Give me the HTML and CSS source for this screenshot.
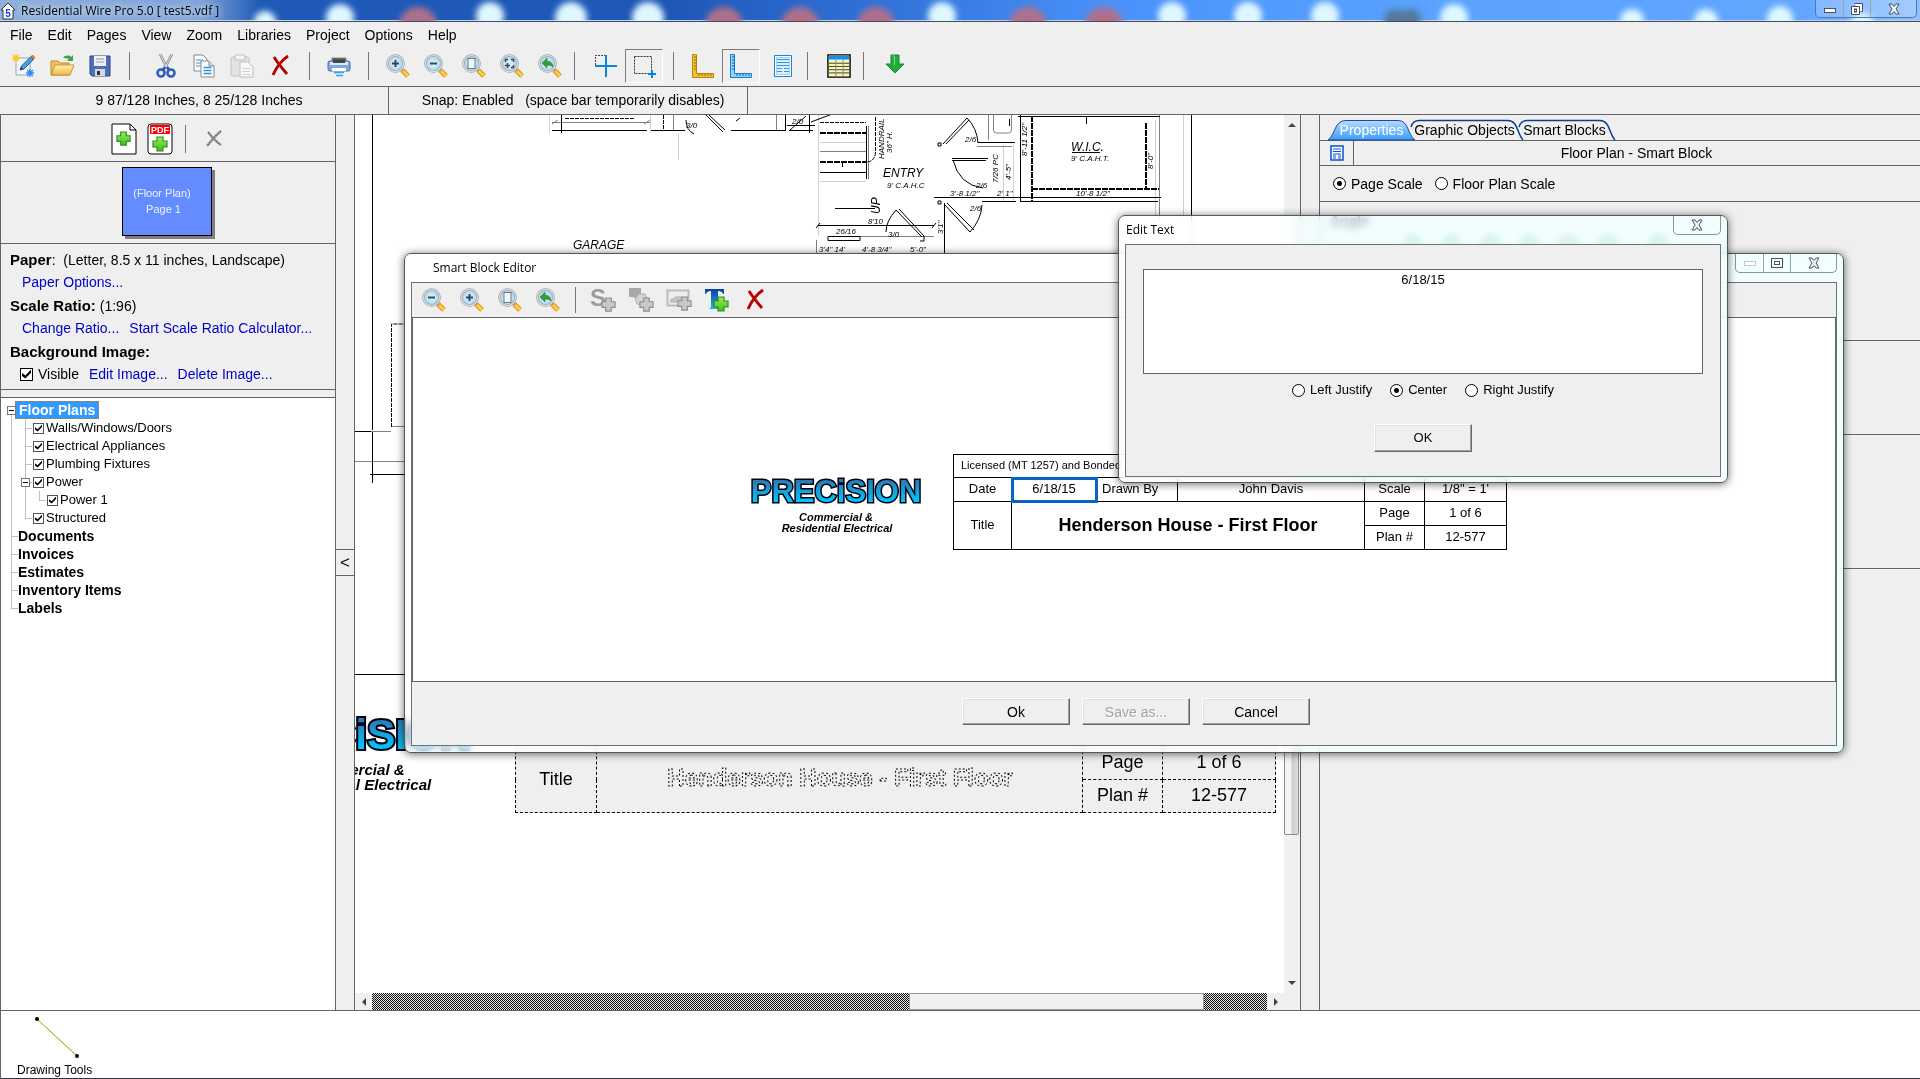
FILE: index.html
```html
<!DOCTYPE html>
<html lang="en">
<head>
<meta charset="utf-8">
<title>Residential Wire Pro 5.0</title>
<link rel="stylesheet" href="styles.css">
</head>
<body>
<svg class="defs" aria-hidden="true">
  <defs>
    <radialGradient id="lens"><stop offset="0" stop-color="#e4f7ff"/><stop offset="1" stop-color="#9fd6f5"/></radialGradient>
    <linearGradient id="folder" x2="0" y2="1"><stop offset="0" stop-color="#fff0b8"/><stop offset="1" stop-color="#f0b83c"/></linearGradient>
    <linearGradient id="greenFill" x2="0" y2="1"><stop offset="0" stop-color="#9be85c"/><stop offset="1" stop-color="#3fc01e"/></linearGradient>
    <linearGradient id="logoFill" x2="0" y2="1"><stop offset="0.1" stop-color="#336fa8"/><stop offset="0.8" stop-color="#00c8ff"/></linearGradient>
    <linearGradient id="tFill" x2="0" y2="1"><stop offset="0" stop-color="#0a3f9e"/><stop offset="1" stop-color="#1cb4f5"/></linearGradient>
    <linearGradient id="tabFill" x2="0" y2="1"><stop offset="0" stop-color="#b4dbff"/><stop offset="1" stop-color="#3c9cfa"/></linearGradient>
  </defs>
  <symbol id="mag" viewBox="0 0 24 24">
    <path d="M16 16l6 6" stroke="#d98a1c" stroke-width="5"/><path d="M16 16l6 6" stroke="#ffd23c" stroke-width="3"/>
    <path d="M14 14l3 3" stroke="#999" stroke-width="2"/>
    <circle cx="9.500" cy="9.500" r="8" fill="url(#lens)" stroke="#8e9399" stroke-width="2.500"/><circle cx="9.500" cy="9.500" r="8" fill="none" stroke="#d8dadd" stroke-width="1.500"/>
  </symbol>
  <symbol id="zoom-in" viewBox="0 0 24 24"><use href="#mag"/><path d="M6 9.500h7M9.500 6v7" stroke="#444" stroke-width="2"/></symbol>
  <symbol id="zoom-out" viewBox="0 0 24 24"><use href="#mag"/><path d="M6 9.500h7" stroke="#444" stroke-width="2"/></symbol>
  <symbol id="zoom-page" viewBox="0 0 24 24"><use href="#mag"/><rect x="6" y="4.500" width="7" height="10" fill="#eef8ff" stroke="#777"/></symbol>
  <symbol id="zoom-fit" viewBox="0 0 24 24"><use href="#mag"/><path d="M5.500 8V5.500H8M11 5.500h2.500V8M13.500 11v2.500H11M5 11.500h5M7.500 9v5" fill="none" stroke="#444" stroke-width="1.500"/></symbol>
  <symbol id="zoom-back" viewBox="0 0 24 24"><use href="#mag"/><path d="M4 9l5-5v3c4 0 6 3 6 6-2-2-4-2-6-1.500V14z" fill="#3a9a3a" stroke="#2a7a2a" stroke-width=".5"/></symbol>
  <symbol id="new" viewBox="0 0 24 24">
    <path d="M4 4h14v17H4z" fill="#f2f6fb" stroke="#9aa7b8"/><path d="M8 16l1.500-4L19 2.500l3 2.500L12 15z" fill="#4a9de0" stroke="#245f9c"/><path d="M19 2.500l1.500-1.500 2.500 2.500L21.500 5z" fill="#e87b20" stroke="#9c4a10" stroke-width=".5"/><path d="M8 16l1-3 2 2z" fill="#333"/>
    <path d="M4 0v8M0 4h8M1 1l6 6M7 1L1 7" stroke="#ffc822" stroke-width="1.300"/><path d="M18 15v8M14 19h8M15 16l6 6M21 16l-6 6" stroke="#2e8bf0" stroke-width="1.400"/>
  </symbol>
  <symbol id="open" viewBox="0 0 24 24">
    <path d="M1 21V7h7l2 2h9v12z" fill="#f0c262" stroke="#b98a2c"/><path d="M1 21l4-10h19l-4 10z" fill="url(#folder)" stroke="#c9932f"/>
    <path d="M13 4c2-3 6-3 8-1l2-2v6h-6l2-2c-2-1-4-1-6-1z" fill="#3da63d"/>
  </symbol>
  <symbol id="save" viewBox="0 0 24 24">
    <path d="M2 2h20v20H4l-2-2z" fill="#4d6fc0" stroke="#2d4485"/><path d="M6 2h12v10H6z" fill="#eef0f3"/><path d="M8 5h8M8 8h8" stroke="#999"/><path d="M7 15h10v7H7z" fill="#d5d9e0"/><path d="M9 17h3v4H9z" fill="#333"/>
  </symbol>
  <symbol id="cut" viewBox="0 0 24 24">
    <path d="M6 0l7 14M18 0l-7 14" stroke="#888" stroke-width="2.600"/><path d="M6 0l7 14M18 0l-7 14" stroke="#e8e8e8" stroke-width="1"/>
    <path d="M11 13l-2 3M13 13l2 3" stroke="#2f5fb8" stroke-width="3"/>
    <circle cx="7" cy="19" r="3.500" fill="none" stroke="#2f5fb8" stroke-width="2.600"/><circle cx="17" cy="19" r="3.500" fill="none" stroke="#2f5fb8" stroke-width="2.600"/>
  </symbol>
  <symbol id="copy" viewBox="0 0 24 24">
    <path d="M2 1h9l4 4v12H2z" fill="#fff" stroke="#888"/><path d="M4 6h7M4 9h7M4 12h7" stroke="#2a8fe0"/>
    <path d="M9 7h8l5 5v11H9z" fill="#fff" stroke="#888"/><path d="M17 7v5h5" fill="#ddd" stroke="#888"/><path d="M11.500 13.500h8M11.500 16.500h8M11.500 19.500h8" stroke="#2a8fe0" stroke-width="1.500"/>
  </symbol>
  <symbol id="paste" viewBox="0 0 24 24">
    <rect x="1" y="3" width="18" height="19" rx="2" fill="#e3e3e3" stroke="#c4c4c4"/><rect x="5" y="1" width="10" height="5" rx="2" fill="#f4f4f4" stroke="#bbb"/>
    <path d="M10 8h8l5 5v10H10z" fill="#f8f8f8" stroke="#bdbdbd"/><path d="M12.500 14.500h8M12.500 17.500h8M12.500 20.500h8" stroke="#d0d0d0"/>
  </symbol>
  <symbol id="del" viewBox="0 0 24 24"><path d="M20 2C14 6 9 12 5 21M6 3c3 5 7 10 13 17" fill="none" stroke="#b80000" stroke-width="2.800"/></symbol>
  <symbol id="print" viewBox="0 0 24 24">
    <path d="M5 4h14v6H5z" fill="#555" stroke="#888"/><rect x="1" y="7" width="22" height="10" rx="2" fill="#7fa9de" stroke="#4770a8"/><path d="M3 8h18v3H3z" fill="#dbe8f7"/><path d="M6 6h12v3H6z" fill="#444"/><path d="M5 14h14v3H5z" fill="#fff"/><path d="M7 18.500h10M9 21.500h7" stroke="#25a7f0" stroke-width="1.500"/>
  </symbol>
  <symbol id="cross" viewBox="0 0 24 24"><path d="M1.500 11V1.500H11" fill="none" stroke="#444" stroke-dasharray="2 1"/><path d="M12 1v22M1 12h22" stroke="#0a84d6" stroke-width="2"/></symbol>
  <symbol id="marquee" viewBox="0 0 24 24"><rect x="2.500" y="2.500" width="17" height="17" fill="none" stroke="#333" stroke-dasharray="2 1"/><path d="M16 20h8M20 16v8" stroke="#0a84d6" stroke-width="2"/></symbol>
  <symbol id="ruler-y" viewBox="0 0 24 26"><path d="M1.500 1.500h4v19h17v4h-21z" fill="#f5c02c" stroke="#b8860b"/><path d="M3 4h3M3 7h3M3 10h3M3 13h3M3 16h3M8 23v-2M11 23v-2M14 23v-2M17 23v-2M20 23v-2" stroke="#9a6c00"/></symbol>
  <symbol id="ruler-b" viewBox="0 0 24 26"><path d="M1.500 1.500h4v19h17v4h-21z" fill="#8fd5fb" stroke="#1680d0"/><path d="M3 4h3M3 7h3M3 10h3M3 13h3M3 16h3M8 23v-2M11 23v-2M14 23v-2M17 23v-2M20 23v-2" stroke="#0e64ad"/></symbol>
  <symbol id="doc" viewBox="0 0 24 24"><path d="M3.500 1.500h17v21h-17z" fill="#fff" stroke="#1b86d8"/><path d="M5.500 3.500h13v17h-13z" fill="#d9effc" stroke="#9bd0f0"/><path d="M6 5.500h12M6 8.500h12M6 11.500h12M6 14.500h5M6 17.500h5M13 14.500h5M13 17.500h5" stroke="#3c95d8"/></symbol>
  <symbol id="grid" viewBox="0 0 26 26"><path d="M1 1h24v24H1z" fill="#f8f8b0" stroke="#000" stroke-width="1.500"/><path d="M2 2h22v4H2z" fill="#1490f0"/><path d="M2 10h22M2 13.500h22M2 17h22M2 20.500h22" stroke="#333"/><path d="M9.500 6v18M17.500 6v18" stroke="#888"/></symbol>
  <symbol id="down" viewBox="0 0 24 24"><path d="M8 1h8v9h5l-9 9-9-9h5z" fill="#22ab3c" stroke="#138a2a"/><path d="M9.500 2h2v9" fill="none" stroke="#7ddd82"/></symbol>
  <symbol id="plus" viewBox="0 0 16 16"><path d="M5 1h6v4h4v6h-4v4H5v-4H1V5h4z" fill="url(#greenFill)" stroke="#2c8f1a" stroke-width="1.200"/></symbol>
  <symbol id="plus-off" viewBox="0 0 16 16"><path d="M5 1h6v4h4v6h-4v4H5v-4H1V5h4z" fill="#c8c8c8" stroke="#8d8d8d" stroke-width="1.200"/></symbol>
  <symbol id="x-close" viewBox="0 0 12 12"><path d="M1 1h3l2 2.500L8 1h3L8 6l3 5H8L6 8.500 4 11H1l3-5z" fill="#f4f4f8" stroke="#4a4f63"/></symbol>
</svg>

<div class="app">
  <header class="titlebar">
    <svg class="desktop-bleed" aria-hidden="true">
      <g class="blob-white"><circle cx="265" cy="22" r="11"/><circle cx="340" cy="18" r="14"/><circle cx="490" cy="16" r="14"/><circle cx="571" cy="18" r="16"/><circle cx="648" cy="18" r="16"/><circle cx="942" cy="16" r="14"/><circle cx="1172" cy="16" r="14"/><circle cx="1248" cy="16" r="14"/><circle cx="1325" cy="16" r="14"/><circle cx="1454" cy="18" r="14"/><circle cx="1632" cy="21" r="12"/><circle cx="1706" cy="21" r="12"/><circle cx="1780" cy="19" r="13"/><circle cx="1862" cy="25" r="12"/></g>
      <g class="blob-red"><circle cx="418" cy="26" r="19"/><circle cx="724" cy="26" r="19"/><circle cx="800" cy="26" r="19"/><circle cx="876" cy="26" r="19"/><circle cx="1028" cy="26" r="19"/><circle cx="1104" cy="26" r="19"/></g>
      <g class="blob-dark"><circle cx="1395" cy="20" r="11"/><circle cx="1410" cy="20" r="11"/></g>
    </svg>
    <svg class="app-icon" width="16" height="18" viewBox="0 0 16 18"><path d="M1 8l7-7 7 7h-2v9H3V8z" fill="#fff" stroke="#333"/><text x="8" y="15" text-anchor="middle" class="app-num">5</text></svg>
    <h1 class="caption">Residential Wire Pro 5.0 [ test5.vdf ]</h1>
    <div class="sysbtns main-sys">
      <button aria-label="Minimize"><svg width="12" height="12"><rect x=".5" y="5.500" width="11" height="4" fill="#fff" stroke="#4a4f63"/></svg></button>
      <button aria-label="Restore"><svg width="12" height="12"><path d="M3.500.500h8v8h-2M.500 3.500h8v8h-8z" fill="#fff" stroke="#4a4f63"/><rect x="3.500" y="6" width="2" height="3" fill="none" stroke="#4a4f63"/></svg></button>
      <button class="wide" aria-label="Close"><svg width="12" height="12"><use href="#x-close"/></svg></button>
    </div>
  </header>

  <nav class="menubar">
    <button>File</button><button>Edit</button><button>Pages</button><button>View</button><button>Zoom</button><button>Libraries</button><button>Project</button><button>Options</button><button>Help</button>
  </nav>

  <div class="toolbar">
    <button class="tool" aria-label="New"><svg><use href="#new"/></svg></button>
    <button class="tool" aria-label="Open"><svg><use href="#open"/></svg></button>
    <button class="tool" aria-label="Save"><svg><use href="#save"/></svg></button>
    <i class="sep wide"></i>
    <button class="tool" aria-label="Cut"><svg><use href="#cut"/></svg></button>
    <button class="tool" aria-label="Copy"><svg><use href="#copy"/></svg></button>
    <button class="tool" aria-label="Paste" disabled><svg><use href="#paste"/></svg></button>
    <button class="tool" aria-label="Delete"><svg><use href="#del"/></svg></button>
    <i class="sep"></i>
    <button class="tool" aria-label="Print"><svg><use href="#print"/></svg></button>
    <i class="sep"></i>
    <button class="tool" aria-label="Zoom in"><svg><use href="#zoom-in"/></svg></button>
    <button class="tool" aria-label="Zoom out"><svg><use href="#zoom-out"/></svg></button>
    <button class="tool" aria-label="Zoom page"><svg><use href="#zoom-page"/></svg></button>
    <button class="tool" aria-label="Zoom fit"><svg><use href="#zoom-fit"/></svg></button>
    <button class="tool" aria-label="Zoom back"><svg><use href="#zoom-back"/></svg></button>
    <i class="sep tight"></i>
    <button class="tool" aria-label="Snap"><svg><use href="#cross"/></svg></button>
    <button class="tool pressed" aria-label="Select area"><svg><use href="#marquee"/></svg></button>
    <i class="sep"></i>
    <button class="tool" aria-label="Ruler"><svg class="tall"><use href="#ruler-y"/></svg></button>
    <button class="tool pressed" aria-label="Scale ruler"><svg class="tall"><use href="#ruler-b"/></svg></button>
    <button class="tool spaced" aria-label="Title block"><svg><use href="#doc"/></svg></button>
    <i class="sep tight"></i>
    <button class="tool" aria-label="Schedule"><svg class="tall"><use href="#grid"/></svg></button>
    <i class="sep tight"></i>
    <button class="tool" aria-label="Download"><svg><use href="#down"/></svg></button>
  </div>

  <div class="status">
    <div class="cell position">9 87/128 Inches, 8 25/128 Inches</div>
    <div class="cell snap">Snap: Enabled &nbsp; (space bar temporarily disables)</div>
  </div>

  <main class="work">
    <aside class="left">
      <div class="page-tools">
        <button aria-label="Add page"><svg width="26" height="32"><path d="M1 1h18l6 6v24H1z" fill="#fff" stroke="#000"/><path d="M19 1v6h6" fill="none" stroke="#000"/><use href="#plus" x="5" y="8" width="15" height="15"/></svg></button>
        <button aria-label="Add PDF page"><svg width="26" height="32"><rect x="1" y="1" width="24" height="30" rx="3" fill="#fff" stroke="#000"/><rect x="3" y="2" width="20" height="9" rx="1" fill="#f00"/><text x="13" y="10" text-anchor="middle" class="pdf">PDF</text><use href="#plus" x="5" y="13" width="16" height="16"/></svg></button>
        <i class="sep"></i>
        <button class="off" aria-label="Remove page" disabled><svg width="16" height="18"><path d="M15 1C9 6 5 11 1 16M2 2c4 5 8 10 13 13" fill="none" stroke="#9a9a9a" stroke-width="2.500"/><path d="M15 1C9 6 5 11 1 16M2 2c4 5 8 10 13 13" fill="none" stroke="#333" stroke-dasharray="1 2"/></svg></button>
      </div>
      <div class="thumbs"><button class="thumb">(Floor Plan)<br>&nbsp;Page 1</button></div>
      <div class="info">
        <div class="info-group"><p><b>Paper</b>: &nbsp;(Letter, 8.5 x 11 inches, Landscape)</p><p class="links"><a href="#">Paper Options...</a></p></div>
        <div class="info-group"><p><b>Scale Ratio:</b> (1:96)</p><p class="links"><a href="#">Change Ratio...</a><a href="#">Start Scale Ratio Calculator...</a></p></div>
        <div class="info-group"><p><b>Background Image:</b></p><p class="links"><label class="vis"><input class="check big" type="checkbox" checked>Visible</label><a href="#">Edit Image...</a><a href="#">Delete Image...</a></p></div>
      </div>
      <div class="tree">
        <ul>
          <li><div class="row"><i class="exp"></i><strong class="sel">Floor Plans</strong></div>
            <ul>
              <li><label class="row"><input class="check" type="checkbox" checked>Walls/Windows/Doors</label></li>
              <li><label class="row"><input class="check" type="checkbox" checked>Electrical Appliances</label></li>
              <li><label class="row"><input class="check" type="checkbox" checked>Plumbing Fixtures</label></li>
              <li><label class="row"><i class="exp"></i><input class="check" type="checkbox" checked>Power</label>
                <ul><li><label class="row"><input class="check" type="checkbox" checked>Power 1</label></li></ul></li>
              <li><label class="row"><input class="check" type="checkbox" checked>Structured</label></li>
            </ul></li>
          <li><div class="row"><strong>Documents</strong></div></li>
          <li><div class="row"><strong>Invoices</strong></div></li>
          <li><div class="row"><strong>Estimates</strong></div></li>
          <li><div class="row"><strong>Inventory Items</strong></div></li>
          <li><div class="row"><strong>Labels</strong></div></li>
        </ul>
      </div>
    </aside>
    <div class="gutter"><button class="collapse">&lt;</button></div>

    <section class="view">
      <div class="canvas">
        <svg class="plan" width="930" height="561" viewBox="355 115 930 561" aria-label="Floor plan">
          <g class="faint"><path d="M549.500 115v18M650.500 115v18M678.500 133v27M818.500 115v121M820 142.500h46M820 181.500h46M1003.500 145v56M1013.500 145v56M1183.500 115v110M1155.500 120v100"/></g>
          <g class="mid"><path d="M552 122.500h98M552 124l6-4M644 124l6-4M673.500 115v15M776.500 115v15M988.500 115v25M977 146.500h35M1159.500 115v110M820 151.500h46M371 431.500h20M391 426.500h13M355 461.500h49M868.500 126v53M832 133.500h8M993.500 115v15q0 3 3 3h12q3 0 3-3v-15M840 236.500h94M816.500 240v13"/></g>
          <g class="ink"><path d="M372.500 115v315M372.500 432v51M1191.500 115v140M355 431.500h16M370 474.500h34M355 674.500h49M561.500 115v18M552 130.500h95M651 130.500h34M731 130.500h54M785.500 115v16M787 125.500h28M789 130.500h24M809.500 115v18M706 115l17 17M709 115l16 15M790 130l16-14M811 122l24-9M820 172.500h46M866.500 126v53M842.500 162v5M835 208.500h40M818 225.500h116M816 228l4-5M932 228l4-5M828 236.500h32v4h-32zM896 210l26 27M899 209l25 27v5h-4M896 210q-10 11-10 22M944.500 203v50M934 197.500h26M944 204l26 28M947 203l27 27M982 205q-1 15-12 27M943 144l24-26M946 144l23-24M967 118q10 10 11 25M978 142.500h37M952 158.500h36M953 160q6 25 30 28M952 160.500h34M960 197.500h57M982 201.500h34M1018 116.500h142M1020.500 115v87M1016 197.500h145M1020 201.500h138M1086.500 116v8M1072 152.500h28M686 120q0 10 8 14M938 143h3v3h-3zM938 201h3v3h-3zM1009.500 119v7M736 121l4-3"/></g>
          <g class="ink thick"><path d="M820 133h46M820 162h46M1032 116v86M1032 189h127M1146 123v66" stroke-dasharray="6 1"/></g>
          <g class="ink dash"><path d="M565 118.500h70M663.500 115v15M820 122.500h46M875.500 117v36q-1 8-8 9M391.500 427v-103h13"/></g>
          <g class="hand"><text x="573" y="249" class="room">GARAGE</text><text x="883" y="177" class="room">ENTRY</text><text x="1071" y="151" class="room">W.I.C.</text><text x="887" y="188">9' C.A.H.C</text><text x="1071" y="161">9' C.A.H.T.</text><text x="868" y="224">8'10</text><text x="836" y="234">26/16</text><text x="888" y="237">3/0</text><text x="686" y="128">3/0</text><text x="792" y="124">2/0</text><text x="819" y="252">3'4"  14'</text><text x="862" y="252">4'-8 3/4"</text><text x="910" y="252">5'-0"</text><text x="965" y="142">2/6</text><text x="976" y="188">2/6</text><text x="970" y="211">2/6</text><text x="950" y="196">3'-8 1/2"</text><text x="997" y="196">2' 1"</text><text x="1076" y="196">10'-8 1/2"</text>
            <text transform="translate(1027 156) rotate(-90)">8'-11 1/2"</text><text transform="translate(1153 169) rotate(-90)">8'-0"</text><text transform="translate(1011 180) rotate(-90)">4'-5"</text><text transform="translate(998 183) rotate(-90)">7/26 PC</text><text transform="translate(884 159) rotate(-90)">HANDRAIL</text><text transform="translate(892 153) rotate(-90)">36" H.</text><text transform="translate(880 214) rotate(-90)" class="room">UP</text><text transform="translate(943 234) rotate(-90)">3'1"</text></g>
        </svg>
        <svg class="logo big-logo" viewBox="0 0 172 78" aria-label="Precision Commercial &amp; Residential Electrical"><use href="#logo"/></svg>
        <table class="block ghost">
          <colgroup><col class="g1"><col class="g2"><col class="g3"><col class="g4"></colgroup>
          <tr><td rowspan="2">Title</td><td rowspan="2"><svg class="ghost-title" width="400" height="40"><text x="200" y="27" text-anchor="middle">Henderson House - First Floor</text></svg></td><td>Page</td><td>1 of 6</td></tr>
          <tr><td>Plan #</td><td>12-577</td></tr>
        </table>
      </div>
      <div class="vbar"><i class="arr up"></i><i class="vthumb"></i><i class="arr dn"></i></div>
      <div class="hbar"><span class="hend"><i class="arr lt"></i></span><span class="htrack"><i class="hthumb"></i></span><span class="hend"><i class="arr rt"></i></span></div>
    </section>
    <div class="gutter right-gutter"></div>

    <aside class="right">
      <div class="tabs">
        <button class="tab on"><svg class="tab-shape" viewBox="0 0 87 20" preserveAspectRatio="none"><path d="M0 20C8 14 6 .500 18 .500H70C81 .500 79 14 87 20z" fill="url(#tabFill)" stroke="#1c4b9c"/></svg><span>Properties</span></button>
        <button class="tab"><svg class="tab-shape" viewBox="0 0 113 20" preserveAspectRatio="none"><path d="M1 7Q3 .500 9 .500H98C108 .500 107 14 113 20" fill="none" stroke="#0a3c9c" stroke-width="1.500"/></svg><span>Graphic Objects</span></button>
        <button class="tab"><svg class="tab-shape" viewBox="0 0 97 20" preserveAspectRatio="none"><path d="M1 7Q3 .500 9 .500H82C92 .500 91 14 97 20" fill="none" stroke="#0a3c9c" stroke-width="1.500"/></svg><span>Smart Blocks</span></button>
      </div>
      <div class="prop-head"><button class="prop-icon" aria-label="Block properties"><svg width="14" height="16"><path d="M1 1h12v14H1z" fill="#fff" stroke="#0a4fd0" stroke-width="1.500"/><path d="M3 4h8M3 6.500h8M3 9h8M3 11h3M8 11h3M3 13h3M8 13h3" stroke="#0a4fd0"/></svg></button><h2>Floor Plan - Smart Block</h2></div>
      <div class="scale-row"><label><input class="radio" type="radio" name="scale" checked>Page Scale</label><label><input class="radio" type="radio" name="scale">Floor Plan Scale</label></div>
      <div class="prop-sec angle"><b>Angle</b><div class="dials"><i></i><i></i><i></i><i></i><i></i><i></i><i></i></div></div>
      <div class="prop-sec s2"></div>
      <div class="prop-sec s3"></div>
    </aside>
  </main>

  <footer class="tray">
    <button class="draw-tool"><svg width="46" height="42"><path d="M3 3l40 37" stroke="#9a9a00"/><circle cx="3" cy="3" r="2"/><circle cx="43" cy="40" r="2"/></svg>Drawing Tools</button>
  </footer>
</div>

<section class="window editor">
  <header class="win-title"><h2>Smart Block Editor</h2>
    <div class="sysbtns">
      <button disabled aria-label="Minimize"><svg width="12" height="12"><rect x=".5" y="4.500" width="11" height="4" fill="#fff" stroke="#c4c8cc"/></svg></button>
      <button aria-label="Maximize"><svg width="12" height="12"><rect x=".5" y="1.500" width="11" height="9" fill="#fff" stroke="#4a4f63"/><rect x="3.500" y="4.500" width="5" height="3" fill="none" stroke="#4a4f63"/></svg></button>
      <button class="wide" aria-label="Close"><svg width="12" height="12"><use href="#x-close"/></svg></button>
    </div>
  </header>
  <div class="win-body">
    <div class="ed-tools">
      <button class="tool" aria-label="Zoom out"><svg><use href="#zoom-out"/></svg></button>
      <button class="tool" aria-label="Zoom in"><svg><use href="#zoom-in"/></svg></button>
      <button class="tool" aria-label="Zoom page"><svg><use href="#zoom-page"/></svg></button>
      <button class="tool" aria-label="Zoom back"><svg><use href="#zoom-back"/></svg></button>
      <i class="sep small"></i>
      <button class="tool" disabled aria-label="Add symbol"><svg><text x="-1" y="18" class="glyph-s">S</text><use href="#plus-off" x="10" y="9" width="15" height="15"/></svg></button>
      <button class="tool" disabled aria-label="Add shape"><svg><path d="M0 0h12v9H0z" fill="#a8a8a8"/><path d="M4 9h5M10 6l6 0 3 6-4 5-7-1-2-6z" fill="#d4d4d4" stroke="#aaa"/><use href="#plus-off" x="10" y="9" width="15" height="15"/></svg></button>
      <button class="tool" disabled aria-label="Add picture"><svg><path d="M.500 2.500h21v15H.500z" fill="#eee" stroke="#bbb" stroke-width="2"/><path d="M3 12c5-5 10-5 16-2v5H3z" fill="#c2c2c2"/><use href="#plus-off" x="10" y="8" width="15" height="15"/></svg></button>
      <button class="tool" aria-label="Add text"><svg><path d="M0 1h19v5h-1q-1-3-5-3v16l2 2H4l2-2V3q-4 0-5 3H0z" fill="url(#tFill)"/><use href="#plus" x="8" y="8" width="16" height="16"/></svg></button>
      <button class="tool" aria-label="Delete"><svg><use href="#del"/></svg></button>
    </div>
    <div class="ed-canvas">
      <svg class="logo" viewBox="0 0 172 78" aria-label="Precision Commercial &amp; Residential Electrical">
        <g id="logo">
          <text x="86" y="45" text-anchor="middle" class="logo-word">PRECiSION</text>
          <text x="86" y="64" text-anchor="middle" class="logo-sub">Commercial &amp;</text>
          <text x="87" y="75" text-anchor="middle" class="logo-sub">Residential Electrical</text>
        </g>
      </svg>
      <table class="block">
        <colgroup><col class="c1"><col class="c2"><col class="c3"><col class="c4"><col class="c5"><col class="c6"></colgroup>
        <tr><td colspan="6" class="lic">Licensed (MT 1257) and Bonded</td></tr>
        <tr><td>Date</td><td class="picked">6/18/15</td><td class="by">Drawn By</td><td>John Davis</td><td>Scale</td><td>1/8" = 1'</td></tr>
        <tr><td rowspan="2">Title</td><td rowspan="2" colspan="3" class="plan-title">Henderson House - First Floor</td><td>Page</td><td>1 of 6</td></tr>
        <tr><td>Plan #</td><td>12-577</td></tr>
      </table>
    </div>
    <div class="ed-actions"><button class="btn">Ok</button><button class="btn" disabled>Save as...</button><button class="btn">Cancel</button></div>
  </div>
</section>

<section class="window dialog">
  <header class="win-title"><h2>Edit Text</h2>
    <div class="sysbtns"><button class="wide" aria-label="Close"><svg width="12" height="12"><use href="#x-close"/></svg></button></div>
  </header>
  <div class="win-body">
    <textarea aria-label="Text">6/18/15</textarea>
    <div class="justify">
      <label><input class="radio" type="radio" name="just">Left Justify</label>
      <label><input class="radio" type="radio" name="just" checked>Center</label>
      <label><input class="radio" type="radio" name="just">Right Justify</label>
    </div>
    <button class="btn ok">OK</button>
  </div>
</section>
</body>
</html>
```

FILE: styles.css
```css
* { box-sizing: border-box; }
body { margin: 0; background: #efefef; color: #000; font: 14px/18px "Liberation Sans", Arial, sans-serif; overflow: hidden; }
button { font: inherit; color: inherit; background: none; border: 0; padding: 0; }
h1, h2, p, ul { margin: 0; padding: 0; font-weight: normal; }
ul { list-style: none; }
a { color: #0000c8; text-decoration: none; }
svg { display: block; overflow: visible; }
.defs { position: absolute; width: 0; height: 0; overflow: hidden; }

.app { display: flex; flex-direction: column; height: 100vh; }

/* main window caption */
.titlebar { position: relative; display: flex; align-items: center; gap: 5px; height: 22px; flex: none; overflow: hidden; border-bottom: 1px solid #444c5c;
  background: linear-gradient(90deg, #8fb0dc 0, #7fa3d8 200px, #1f5ab8 260px, #1f57b8 35%, #3478de 48%, #4a92fa 58%, #5aa3ff 75%, #62a6ff 94%, #8fc0ff 100%); box-shadow: inset 0 -1px #b9d2f2; }
.desktop-bleed { position: absolute; left: 0; top: 0; width: 100%; height: 21px; filter: blur(3px); }
.blob-white { fill: #dff8ff; }
.blob-red { fill: #b0708c; }
.blob-dark { fill: #55789a; }
.app-icon { position: relative; }
.app-num { font: bold 10px "Liberation Sans", sans-serif; fill: #1540e0; }
.caption { position: relative; font: 12px/20px "Open Sans", "Noto Sans", sans-serif; text-shadow: 0 0 6px #cfe0f5, 0 0 6px #cfe0f5; }
.sysbtns { display: flex; align-self: flex-start; height: 19px; margin-left: auto; border: 1px solid #8a9494; border-top: 0; border-radius: 0 0 5px 5px; }
.sysbtns button { width: 27px; display: grid; place-items: center; border-left: 1px solid #9aa4a4; }
.sysbtns button:first-child { border-left: 0; }
.sysbtns .wide { width: 46px; }
.main-sys { position: relative; height: 18px; margin-right: 3px; border-color: #4f77b0; background: #ffffff30; }

.menubar { display: flex; gap: 15px; flex: none; padding: 2px 10px 0; height: 24px; line-height: 22px; }

.toolbar { display: flex; flex: none; height: 41px; padding: 3px 5px; border-bottom: 1px solid #646464; }
.tool { width: 38px; flex: none; display: grid; place-items: center; }
.tool svg { width: 24px; height: 24px; }
.tool .tall { height: 26px; }
.tool.pressed { border: 1px solid; border-color: #7c7c7c #fff #fff #7c7c7c; }
.tool.spaced { margin-left: 4px; }
.sep { width: 1px; height: 28px; margin: 0 10px; align-self: center; background: #777; flex: none; }
.sep.wide { margin-right: 17px; }
.sep.tight { margin: 0 12px 0 5px; }
.sep.small { margin: 0 8px; height: 26px; }

.status { display: flex; flex: none; height: 28px; line-height: 27px; border-bottom: 1px solid #646464; }
.cell { border-right: 1px solid #646464; text-align: center; white-space: nowrap; }
.position { width: 389px; padding-left: 10px; }
.snap { width: 359px; padding-left: 10px; }

.work { flex: 1; min-height: 0; display: flex; border-bottom: 1px solid #646464; }
.left { width: 336px; flex: none; display: flex; flex-direction: column; border: 1px solid #646464; border-width: 0 1px; }
.page-tools { display: flex; align-items: center; padding: 2px 0 0 110px; height: 47px; flex: none; border-bottom: 1px solid #646464; }
.page-tools button + button { margin-left: 10px; }
.page-tools .sep { margin: 0 20px 0 12px; }
.pdf { font: bold 9px "Liberation Sans", sans-serif; fill: #fff; }
.thumbs { height: 82px; flex: none; padding: 5px 0 0 121px; border-bottom: 1px solid #646464; }
.thumb { width: 90px; height: 69px; padding: 0 10px 2px 0; background: #648cff; border: 1px solid #000; box-shadow: 3px 3px #7f7f7f; color: #eef2ff; font-size: 11px; line-height: 16px; }
.info { display: flex; flex-direction: column; gap: 2px; padding: 5px 0 4px 9px; line-height: 22px; white-space: nowrap; border-bottom: 1px solid #646464; }
.info b { font-size: 15px; }
.links { display: flex; gap: 10px; padding-left: 12px; }
.vis { display: flex; align-items: center; margin-left: -2px; gap: 5px; }

.check { appearance: none; margin: 0; width: 11px; height: 11px; flex: none; border: 1px solid #555; background: #fff; display: grid; }
.check.big { width: 13px; height: 13px; border-color: #000; }
.check:checked::before { content: ""; margin: 1px; background: #000; clip-path: polygon(0 38%, 38% 68%, 100% 0, 100% 36%, 38% 100%, 0 72%); }
.radio { appearance: none; margin: 0; width: 13px; height: 13px; flex: none; border: 1px solid #000; border-radius: 50%; background: #fff; }
.radio:checked { background: radial-gradient(circle, #000 2px, #fff 3px); }

.tree { flex: 1; margin: 7px 0 0; padding-top: 3px; background: #fff; border-top: 1px solid #646464; }
.tree li { position: relative; }
.tree li::before { content: ""; position: absolute; left: 10px; top: 9px; width: 7px; height: 1px; background: #c0c0c0; }
.tree li::after { content: ""; position: absolute; left: 10px; top: 0; bottom: 0; width: 1px; background: #c0c0c0; }
.tree > ul > li:first-child::after { top: 9px; }
.tree li:last-child::after { bottom: auto; height: 10px; }
.tree ul ul { margin-left: 14px; }
.row { position: relative; display: flex; align-items: center; gap: 2px; height: 18px; padding-left: 18px; font-size: 13px; white-space: nowrap; }
.row strong { font-size: 14px; margin-left: -1px; }
.row .sel { margin-left: -4px; padding: 0 3px; line-height: 16px; background: #39f; color: #fff; border: 1px dotted #d07020; }
.exp { position: absolute; z-index: 1; left: 6px; top: 5px; width: 9px; height: 9px; border: 1px solid #777; background: linear-gradient(#000, #000) center / 5px 1px no-repeat #fff; }

.gutter { width: 19px; flex: none; border-right: 1px solid #646464; display: flex; align-items: flex-start; }
.right-gutter { width: 20px; border-left: 1px solid #646464; }
.collapse { width: 18px; height: 27px; margin-top: 434px; border: 1px solid #646464; border-width: 1px 0; font-size: 17px; }

/* drawing view */
.view { flex: 1; min-width: 0; display: grid; grid-template: minmax(0, 1fr) 17px / minmax(0, 1fr) 16px; }
.canvas { position: relative; overflow: hidden; background: #fff; }
.plan { position: absolute; left: 0; top: 0; overflow: hidden; }
.plan path { fill: none; }
.faint { stroke: #d0d0d0; }
.mid { stroke: #808080; }
.ink { stroke: #000; }
.thick { stroke-width: 2; }
.dash { stroke-dasharray: 4 1; }
.hand { font: italic 8px "Liberation Sans", sans-serif; }
.room { font-size: 12px; }
.logo { width: 172px; height: 78px; flex: none; }
.big-logo { position: absolute; left: -119px; top: 572px; width: 236px; height: 107px; }
.logo-word { font: bold 31px "Liberation Sans Narrow", "Liberation Sans", sans-serif; fill: url(#logoFill); stroke: #001; stroke-width: 3px; paint-order: stroke; }
.logo-sub { font: italic bold 11px "Liberation Sans", sans-serif; }

.vbar { background: #f0f0f0; display: flex; flex-direction: column; align-items: center; justify-content: space-between; padding: 8px 0; position: relative; }
.vthumb { position: absolute; left: 0; top: 400px; width: 15px; height: 320px; border: 1px solid #8c8c8c; border-radius: 2px; background: linear-gradient(90deg, #f4f4f4 45%, #cdcdcd 55%, #dedede); }
.arr { width: 0; height: 0; border: 4px solid transparent; }
.up { border-top: 0; border-bottom-color: #444; }
.dn { border-bottom: 0; border-top-color: #444; }
.lt { border-left: 0; border-right-color: #444; }
.rt { border-right: 0; border-left-color: #444; }
.hbar { grid-column: 1 / 3; display: flex; background: #f0f0f0; }
.hend { width: 17px; display: grid; place-items: center; }
.hend:last-child { margin-right: 16px; }
.htrack { flex: 1; display: flex; background: repeating-conic-gradient(#111 0 25%, #e4e4e4 0 50%) 0 0 / 2px 2px; }
.hthumb { width: 33%; margin-left: 60%; border: 1px solid #999; background: #f0f0f0; }

/* title block tables */
.block { border-collapse: collapse; table-layout: fixed; width: 553px; font-size: 13px; line-height: 16px; text-align: center; }
.block td { border: 1px solid #000; padding: 0 0 2px; height: 24px; }
.block .lic { text-align: left; padding-left: 7px; height: 23px; font-size: 11px; }
.block .by { text-align: left; padding-left: 5px; }
.block .picked { outline: 3px solid #0a64c8; outline-offset: -2px; }
.block .plan-title { font-size: 18px; font-weight: bold; }
.c1 { width: 58px; } .c2 { width: 85px; } .c3 { width: 81px; } .c4 { width: 187px; } .c5 { width: 60px; } .c6 { width: 82px; }
.ghost { position: absolute; left: 160px; top: 631px; width: 761px; font-size: 18px; line-height: 20px; background: #efefef; }
.ghost td { border: 1px dashed #000; height: 33px; }
.g1 { width: 81px; } .g2 { width: 486px; } .g3 { width: 80px; } .g4 { width: 113px; }
.ghost-title { margin: 0 auto; font: bold 24px "Liberation Sans", sans-serif; fill: none; stroke: #000; stroke-dasharray: 2 2; }

/* properties panel */
.right { width: 600px; flex: none; }
.tabs { display: flex; height: 26px; padding: 5px 0 0 8px; border-bottom: 1px solid #646464; }
.tab { position: relative; height: 20px; width: 97px; }
.tab + .tab { margin-left: -5px; }
.tab:nth-child(1) { width: 87px; color: #fff; }
.tab:nth-child(2) { width: 113px; }
.tab-shape { position: absolute; inset: 0; width: 100%; height: 100%; }
.tab span { position: relative; font-size: 14px; white-space: nowrap; }
.tab + .tab span { right: 2px; }
.prop-head { display: flex; height: 25px; border-bottom: 1px solid #646464; line-height: 25px; }
.prop-icon { width: 34px; display: grid; place-items: center; border-right: 1px solid #646464; }
.prop-head h2 { flex: 1; text-align: center; font-size: 14px; padding-right: 1px; }
.scale-row { display: flex; align-items: center; gap: 12px; height: 36px; padding-left: 13px; border-bottom: 1px solid #646464; }
.scale-row label, .justify label { display: flex; align-items: center; gap: 5px; white-space: nowrap; }
.prop-sec { height: 134px; border-bottom: 1px solid #646464; }
.angle { height: 139px; padding: 10px; color: #224; }
.s2 { height: 94px; }
.dials { display: flex; gap: 24px; padding: 6px 0 0 75px; }
.dials i { width: 15px; height: 14px; border: 3px solid #2f9c84; border-bottom: 0; border-radius: 8px 8px 0 0; }
.dials i:last-child { margin-left: 12px; }

.tray { height: 68px; flex: none; padding: 5px 16px 0; background: #fff; border: solid #646464; border-width: 0 0 0 1px; box-shadow: inset 0 -1px #334; }
.draw-tool { display: flex; flex-direction: column; align-items: flex-start; font-size: 12px; line-height: 16px; white-space: nowrap; }
.draw-tool svg { margin: 0 0 4px 17px; }

/* floating windows */
.window { position: absolute; display: flex; flex-direction: column; border: 1px solid #54585a; border-radius: 7px; padding: 0 6px 6px; box-shadow: 0 1px 8px #0009; backdrop-filter: blur(4px) brightness(1.06); }
.win-title { display: flex; flex: none; height: 28px; }
.win-title h2 { font: 12px/27px "Open Sans", "Noto Sans", sans-serif; }
.win-body { flex: 1; display: flex; flex-direction: column; border: 1px solid #6e7272; background: #efefef; }
.editor { left: 404px; top: 253px; width: 1440px; height: 500px; background: linear-gradient(90deg, #ffffffa0 890px, #ecffffc0 910px); }
.editor .win-title h2 { padding-left: 22px; }
.ed-tools { display: flex; height: 34px; flex: none; padding-left: 3px; }
.ed-canvas { flex: 1; display: flex; gap: 31px; align-items: flex-start; padding: 136px 0 0 337px; background: #fff; border: 1px solid #646464; }
.ed-canvas .logo { margin-top: 3px; }
.ed-actions { height: 63px; flex: none; display: flex; justify-content: center; gap: 12px; padding: 16px 0 0 24px; }
.btn { width: 108px; height: 27px; background: #efefef; border: 1px solid; border-color: #fff #696969 #696969 #fff; box-shadow: inset -1px -1px #a0a0a0, inset 1px 1px #e3e3e3; }
.btn:disabled { color: #a0a0a0; text-shadow: 1px 1px #fff; }
.glyph-s { font: bold 24px "Liberation Sans", sans-serif; fill: #9c9c9c; }
.dialog { left: 1118px; top: 215px; width: 610px; height: 268px; background: linear-gradient(90deg, #ffffffa0 160px, #ecffffa0 190px); }
.dialog .win-body { align-items: center; padding: 24px 17px; font-size: 13px; }
.dialog .win-title h2 { padding-left: 1px; }
.dialog textarea { width: 100%; height: 105px; resize: none; border: 1px solid #646464; padding: 2px; text-align: center; font: 13px/16px "Liberation Sans", Arial, sans-serif; background: #fff; outline: 0; }
.justify { display: flex; gap: 18px; margin-top: 7px; }
.ok { width: 98px; height: 28px; margin-top: 25px; }
```
